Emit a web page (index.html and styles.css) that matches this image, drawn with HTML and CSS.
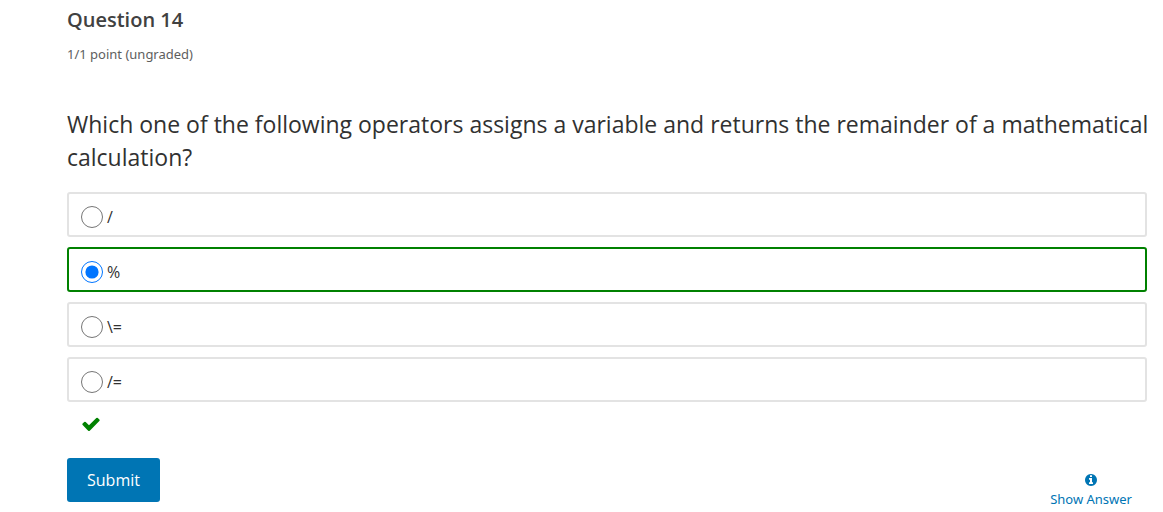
FILE: index.html
```html
<!DOCTYPE html>
<html lang="en">
<head>
<meta charset="utf-8">
<meta name="viewport" content="width=device-width, initial-scale=1">
<title>Question 14</title>
<link rel="stylesheet" href="styles.css">
</head>
<body>
<main class="problem">
  <h1 class="problem-title">Question 14</h1>
  <p class="problem-score">1/1 point (ungraded)</p>
  <form class="problem-form">
    <fieldset class="choices">
      <legend class="question">Which one of the following operators assigns a variable and returns the remainder of a mathematical calculation?</legend>
      <label class="choice"><input class="choice-radio" type="radio" name="answer"><span>/</span></label>
      <label class="choice choice-correct"><input class="choice-radio" type="radio" name="answer" checked><span>%</span></label>
      <label class="choice"><input class="choice-radio" type="radio" name="answer"><span>\=</span></label>
      <label class="choice"><input class="choice-radio" type="radio" name="answer"><span>/=</span></label>
    </fieldset>
    <div class="status">
      <svg class="status-icon" viewBox="0 0 1792 1792" role="img" aria-label="Correct"><path fill="currentColor" d="M1671 566q0 40-28 68l-724 724-136 136q-28 28-68 28t-68-28l-136-136-362-362q-28-28-28-68t28-68l136-136q28-28 68-28t68 28l294 295 656-657q28-28 68-28t68 28l136 136q28 28 28 68z"/></svg>
    </div>
    <div class="actions">
      <button class="submit" type="button">Submit</button>
      <button class="show-answer" type="button">
        <svg class="info-icon" viewBox="0 0 1536 1536" aria-hidden="true"><path fill="currentColor" d="M1024 1248v-160q0-14-9-23t-23-9h-96V544q0-14-9-23t-23-9H544q-14 0-23 9t-9 23v160q0 14 9 23t23 9h96v320h-96q-14 0-23 9t-9 23v160q0 14 9 23t23 9h448q14 0 23-9t9-23zM896 352V192q0-14-9-23t-23-9H672q-14 0-23 9t-9 23v160q0 14 9 23t23 9h192q14 0 23-9t9-23zm640 416q0 209-103 385.500T1153.500 1433 768 1536t-385.500-103T103 1153.500 0 768t103-385.500T382.500 103 768 0t385.500 103T1433 382.500 1536 768z"/></svg>
        <span>Show Answer</span>
      </button>
    </div>
  </form>
</main>
</body>
</html>
```
FILE: styles.css
```css
* { box-sizing: border-box; }
body {
  margin: 0;
  background: #fff;
  color: #313131;
  font-family: "Open Sans", "Noto Sans", sans-serif;
  font-size: 14px;
}
.problem { padding: 8px 16px 0 67px; }
.problem-title {
  margin: 0;
  color: #414141;
  font-size: 20px;
  line-height: 24px;
  font-weight: 600;
}
.problem-score {
  margin: 12px 0 44px;
  color: #5e5e5e;
  font-family: "Noto Sans", sans-serif;
  font-size: 13px;
  line-height: 20px;
}
.problem-form { margin: 0; }
.choices { margin: 0 -16px 0 0; padding: 0 16px 0 0; border: 0; min-width: 0; }
.question {
  padding: 0;
  margin-right: -16px;
  margin-bottom: 18px;
  font-size: 23px;
  line-height: 33px;
}
.choice {
  display: flex;
  align-items: center;
  gap: 4px;
  height: 45px;
  margin-bottom: 10px;
  padding: 4px 12px 0;
  border: 2px solid #e3e3e3;
  border-radius: 3px;
  font-size: 16px;
  line-height: 20px;
}
.choice-correct { border-color: #008100; }
.choice-radio {
  width: 22px;
  height: 22px;
  margin: 0;
  accent-color: #0075ff;
}
.status { display: flex; padding: 2px 0 0 14px; }
.status-icon { width: 20px; height: 20px; color: #008100; }
.actions {
  display: flex;
  justify-content: space-between;
  align-items: flex-start;
  margin-top: 24px;
}
.submit {
  height: 44px;
  padding: 0 20px;
  border: 0;
  border-radius: 3px;
  background: #0075b4;
  color: #fff;
  font: 16px/24px "Open Sans", sans-serif;
}
.show-answer {
  display: flex;
  flex-direction: column;
  align-items: center;
  gap: 3px;
  margin-top: 16px;
  padding: 0 15px;
  border: 0;
  background: none;
  color: #0075b4;
  font: 13px/20px "Noto Sans", sans-serif;
}
.info-icon { width: 12px; height: 12px; }
```
